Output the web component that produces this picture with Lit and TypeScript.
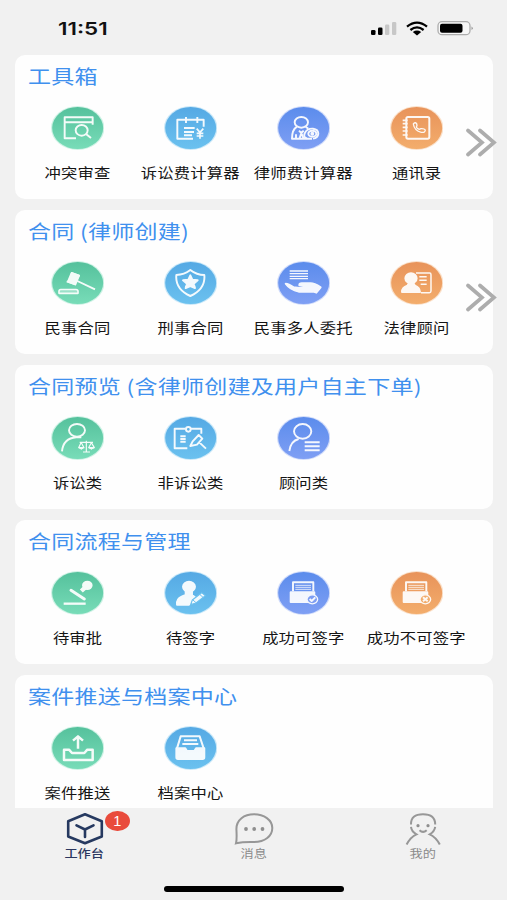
import { LitElement, html, css, svg, nothing, type SVGTemplateResult } from "lit";
import { customElement, property } from "lit/decorators.js";

type Tone = "green" | "sky" | "blue" | "orange";
interface Entry { label: string; icon: string; tone: Tone; }
interface Section { title: string; more?: boolean; entries: Entry[]; }

const SECTIONS: Section[] = [
  { title: "工具箱", more: true, entries: [
    { label: "冲突审查", icon: "search", tone: "green" },
    { label: "诉讼费计算器", icon: "calendar", tone: "sky" },
    { label: "律师费计算器", icon: "lawyer", tone: "blue" },
    { label: "通讯录", icon: "contacts", tone: "orange" },
  ] },
  { title: "合同 (律师创建)", more: true, entries: [
    { label: "民事合同", icon: "gavel", tone: "green" },
    { label: "刑事合同", icon: "shield", tone: "sky" },
    { label: "民事多人委托", icon: "hand", tone: "blue" },
    { label: "法律顾问", icon: "card", tone: "orange" },
  ] },
  { title: "合同预览 (含律师创建及用户自主下单)", entries: [
    { label: "诉讼类", icon: "scales", tone: "green" },
    { label: "非诉讼类", icon: "clipboard", tone: "sky" },
    { label: "顾问类", icon: "advisor", tone: "blue" },
  ] },
  { title: "合同流程与管理", entries: [
    { label: "待审批", icon: "stamp", tone: "green" },
    { label: "待签字", icon: "sign", tone: "sky" },
    { label: "成功可签字", icon: "boxOk", tone: "blue" },
    { label: "成功不可签字", icon: "boxNo", tone: "orange" },
  ] },
  { title: "案件推送与档案中心", entries: [
    { label: "案件推送", icon: "upload", tone: "green" },
    { label: "档案中心", icon: "drawer", tone: "sky" },
  ] },
];

const TONES: Record<Tone, [string, string]> = {
  green: ["#55c19c", "#78dcb8"],
  sky: ["#55a9e4", "#6bc1ef"],
  blue: ["#5b8cec", "#7f9ff4"],
  orange: ["#e8935a", "#f3ad6c"],
};

const box = (mark: SVGTemplateResult) => svg`
  <path d="M48 61V34H109V61"/><path d="M55 43H102M55 49H102M55 55H102" stroke-width="2.5"/>
  <path class="f" d="M41 64H112V93H41Z"/>
  <ellipse cx="106" cy="85" rx="16" ry="13.5" style="fill:var(--tone)" stroke-width="4"/>${mark}`;

const ICONS: Record<string, SVGTemplateResult> = {
  search: svg`<path d="M75 97H41V34H125V49H41M125 49V56"/><ellipse cx="92" cy="73" rx="18" ry="16"/><path d="M105 84L120 96"/>`,
  calendar: svg`<path d="M87 98H40V41H119V62M66 33V51M100 33V51M60 66H92M60 78H90M60 88H84"/><path d="M98 68L108 79L118 68M108 79V98M98 82H118M98 90H118" stroke-width="5"/>`,
  lawyer: svg`<ellipse cx="73" cy="49" rx="20" ry="16"/><path d="M60 62Q45 71 45 98H105M86 62L94 68M66 74L73 81L80 74M68 96L73 81L79 96M57 85V97"/><path d="M90 97Q78 94 83 82Q90 67 108 68Q124 70 124 83Q123 96 108 98"/><ellipse cx="106" cy="83" rx="12" ry="9"/><circle class="f" cx="106" cy="83" r="3"/>`,
  contacts: svg`<rect x="49" y="33" width="69" height="65" rx="5" stroke-width="6"/><path d="M38 43H53M38 53H53M38 64H53M38 75H53M38 87H53" stroke-width="5"/><path d="M70 54Q75 47 80 53L81 59Q77 63 82 67Q87 72 92 68Q103 67 106 72Q105 81 94 79Q73 74 70 54Z" stroke-width="4"/>`,
  gavel: svg`<path class="f" d="M62 36L84 44L73 70L51 62Z"/><path d="M60 36L86 45M47 61L75 71M79 60L132 85"/><path d="M24 97V91Q24 86 29 86H75Q81 86 81 91V97Z" stroke-width="5"/><path d="M25 93H80" stroke-width="2"/>`,
  shield: svg`<path d="M79 27Q98 42 121 42Q125 84 79 105Q33 84 37 42Q61 41 79 27Z"/><path class="f" d="M79 43L85 56L101 58L89 68L93 81L79 75L65 81L69 68L57 58L73 56Z"/>`,
  hand: svg`<path d="M38 30H93M38 38H93M38 46H93M38 53H93" stroke-width="4"/><path class="f" d="M26 68Q35 68 50 79L68 81Q82 81 83 76L67 73Q66 67 74 67H101Q112 67 131 79L118 95L109 92H65Q39 86 26 68Z"/>`,
  card: svg`<path d="M78 36H119Q123 36 123 41V90Q123 95 118 95H93M88 47H110M88 58H110M92 70H110" stroke-width="4.5"/><ellipse class="f" cx="63" cy="52" rx="17" ry="15"/><path class="f" d="M36 93Q36 79 52 74L57 66H70L75 74Q89 79 90 93Z"/>`,
  scales: svg`<ellipse cx="78" cy="43" rx="24" ry="19"/><path d="M33 106Q37 67 76 64H91"/><path d="M106 74V107M86 79H126M96 108H117M90 80L83 95H99L91 80M121 80L113 95H130L121 80" stroke-width="3.5"/><path class="f" d="M84 95H98Q91 104 84 95M114 95H129Q121 104 114 95" stroke-width="3"/>`,
  clipboard: svg`<path d="M70 97H32V38H65M81 38H112V53"/><circle cx="73" cy="40" r="7"/><path d="M49 61H65M49 69H65M49 77H65"/><path d="M104 57L115 68L99 86L79 90L86 76ZM106 79L126 98"/>`,
  advisor: svg`<ellipse cx="77" cy="46" rx="26" ry="22"/><path d="M37 105Q41 75 65 69M83 79H128M83 91H128M83 103H128"/>`,
  stamp: svg`<ellipse class="f" cx="109" cy="43" rx="13" ry="11"/><path d="M103 49L91 60" stroke-width="13"/><path d="M60 58L100 84" stroke-width="9" stroke-linecap="round"/><path d="M38 98H104" stroke-width="7"/>`,
  sign: svg`<ellipse class="f" cx="75" cy="47" rx="18" ry="15"/><path class="f" d="M65 60H84V72L93 79L75 101H39Q37 84 53 77L65 72Z"/><path d="M80 101L85 87L113 65L124 74L96 96Z" style="fill:#fff;stroke:var(--tone)" stroke-width="3.5"/><path d="M107 70L117 79M87 87L96 95" style="stroke:var(--tone)" stroke-width="3"/>`,
  boxOk: box(svg`<path d="M98 84L104 90L115 79"/>`),
  boxNo: box(svg`<path d="M99 79L113 91M113 79L99 91"/>`),
  upload: svg`<path d="M81 68V32M66 44L81 31L96 44" stroke-width="7.5"/><path d="M39 71H54L63 81H100L109 71H125V102H39Z" stroke-width="7.5"/>`,
  drawer: svg`<path d="M39 67L50 31H107L119 67M60 43H99M55 54H103" stroke-width="6"/><path class="f" d="M37 67H64L69 75H91L96 67H121V94Q121 99 116 99H42Q37 99 37 94Z"/>`,
};

@customElement("menu-item")
class MenuItem extends LitElement {
  @property({ attribute: false }) entry!: Entry;
  static styles = css`
    :host { display: flex; flex-direction: column; align-items: center; min-width: 0; }
    .icon { display: block; width: 53.33px; height: 44px; }
    .glyph { fill: none; stroke: #fff; stroke-width: 5.8; stroke-linejoin: round; opacity: .93; }
    .f { fill: #fff; }
    .label { margin-top: 12px; font-size: 13.6px; line-height: 20px; letter-spacing: .15px; white-space: nowrap; color: #151515; transform: scaleX(1.2); }
  `;
  render() {
    const [top, bottom] = TONES[this.entry.tone];
    return html`
      <svg class="icon" viewBox="0 0 160 132">
        <defs><linearGradient id="tone" x2="0" y2="1">
          <stop stop-color=${top}></stop><stop offset="1" stop-color=${bottom}></stop>
        </linearGradient></defs>
        <ellipse cx="80" cy="66" rx="80" ry="66" fill=${bottom} opacity=".35"></ellipse>
        <ellipse cx="80" cy="66" rx="76.5" ry="63" fill="url(#tone)"></ellipse>
        <g class="glyph" style="--tone:${bottom}">${ICONS[this.entry.icon]}</g>
      </svg>
      <span class="label">${this.entry.label}</span>`;
  }
}

@customElement("menu-card")
class MenuCard extends LitElement {
  @property({ attribute: false }) section!: Section;
  static styles = css`
    :host { display: block; flex: none; box-sizing: border-box; position: relative; height: 144px; padding: 6px 20px 0 6px; border-radius: 10px; background: #fefefe; }
    .title { display: block; width: max-content; margin: 0 0 0 7px; font-weight: 400; font-size: 19.2px; line-height: 30px; letter-spacing: .2px; color: #4090ee; white-space: nowrap; transform: scaleX(1.2); transform-origin: left; }
    .grid { display: grid; grid-template-columns: repeat(4, 113px); margin-top: 14.7px; }
    .more { position: absolute; right: -4px; top: 73px; width: 31px; height: 29px; fill: none; stroke: #adadad; stroke-width: 3.7; stroke-linecap: round; stroke-linejoin: miter; }
  `;
  render() {
    return html`
      <h2 class="title">${this.section.title}</h2>
      <div class="grid">${this.section.entries.map((e) => html`<menu-item .entry=${e}></menu-item>`)}</div>
      ${this.section.more
        ? html`<svg class="more" viewBox="0 0 31 29"><path d="M2 2.5L16 14.5L2 26.5M14 2.5L28 14.5L14 26.5"></path></svg>`
        : nothing}`;
  }
}

@customElement("app-root")
class AppRoot extends LitElement {
  static styles = css`
    :host { display: flex; flex-direction: column; height: 900px; overflow: hidden; background: #f1f1f1; font-family: "Noto Sans CJK SC", sans-serif; }
    .status { flex: none; height: 55px; box-sizing: border-box; display: flex; justify-content: space-between; align-items: flex-start; padding: 18px 34px 0 58px; }
    .time { font: 600 17.5px/22px Inter, sans-serif; color: #111; transform: scaleX(1.28); transform-origin: left; }
    .signals { width: 103px; height: 20px; }
    .cards { flex: none; height: 753px; overflow: hidden; display: flex; flex-direction: column; gap: 11px; padding: 0 14px 0 15px; }
    .tabs { flex: none; height: 92px; box-sizing: border-box; display: grid; grid-template-columns: repeat(3, 1fr); padding-top: 4px; position: relative; }
    .tab { display: flex; flex-direction: column; align-items: center; color: #8b8b8b; font-size: 10.8px; line-height: 16px; }
    .active { color: #2b3760; font-weight: 500; }
    .pic { width: 42px; height: 34px; fill: none; stroke: #979797; stroke-width: 2; }
    .dark { stroke: #263960; stroke-width: 2.6; stroke-linejoin: round; stroke-linecap: round; }
    .dot { fill: #8f8f8f; stroke: none; }
    .text { transform: translateY(-.6px) scaleX(1.22); }
    .wrap { position: relative; display: flex; }
    .badge { position: absolute; left: 41.5px; top: -1px; width: 24.5px; height: 20px; border-radius: 50%; background: #e94b3c; color: #fff; text-align: center; font: 14.5px/20px "Liberation Sans", sans-serif; }
    .home { position: absolute; left: 164px; bottom: 8.5px; width: 180px; height: 5.5px; border-radius: 3px; background: #000; }
  `;
  render() {
    return html`
      <div class="status">
        <span class="time">11:51</span>
        <svg class="signals" viewBox="370 18 103 20">
          <rect x="371" y="30" width="4.5" height="5" rx="1.3"></rect>
          <rect x="378" y="27.5" width="4.5" height="7.5" rx="1.3"></rect>
          <rect x="385" y="24.5" width="4.3" height="10.5" rx="1.3" fill="#c7c7c7"></rect>
          <rect x="392" y="22" width="4.3" height="13" rx="1.3" fill="#c7c7c7"></rect>
          <g fill="none" stroke="#000" stroke-width="2.3">
            <path d="M407 26.7Q417 18.6 427 26.7M410.4 30Q417 24.8 423.6 30"></path>
          </g>
          <path d="M412.8 32Q417 29.2 421.2 32L417 35.4Z"></path>
          <rect x="438" y="21.7" width="32" height="13" rx="4" fill="#f7f7f7" stroke="#adadad" stroke-width="1.3"></rect>
          <rect x="440" y="23.8" width="22.5" height="9" rx="2"></rect>
          <path d="M471.5 26.5Q474 28.2 471.5 30Z" fill="#999"></path>
        </svg>
      </div>
      <main class="cards">${SECTIONS.map((s) => html`<menu-card .section=${s}></menu-card>`)}</main>
      <nav class="tabs">
        <div class="tab active">
          <div class="wrap">
            <svg class="pic dark" viewBox="0 0 42 34"><path d="M21 2.3L37.8 9.3V24.5L21 31.3L4.2 24.5V9.3ZM12.5 13.3L21 17.5L29.5 13.3M21 17.5V25"></path></svg>
            <span class="badge">1</span>
          </div>
          <span class="text">工作台</span>
        </div>
        <div class="tab">
          <svg class="pic" viewBox="0 0 42 34"><path d="M3 31.3Q4 28 3.4 17C3.4 8 11 2.3 21 2.3S39.3 8 39.3 16S32 30 21 30Q10 29.7 3 31.3Z"></path><g class="dot"><circle cx="13" cy="17" r="1.9"></circle><circle cx="21.2" cy="17" r="1.9"></circle><circle cx="29.5" cy="17" r="1.9"></circle></g></svg>
          <span class="text">消息</span>
        </div>
        <div class="tab">
          <svg class="pic" viewBox="0 0 42 34"><path d="M9 12.5Q8.8 2.3 21 2.3T33.2 12.5M9 14.8Q9.5 19.5 14.5 22.3Q8.5 25 4.6 32.5M33.2 14.8Q32.5 19.5 27.7 22.3Q33.8 25 37.8 32.5M17.5 18.2Q21 21.5 24.7 18.2"></path><g class="dot"><circle cx="16" cy="13.7" r="1.6"></circle><circle cx="26" cy="13.7" r="1.6"></circle></g></svg>
          <span class="text">我的</span>
        </div>
        <div class="home"></div>
      </nav>`;
  }
}
